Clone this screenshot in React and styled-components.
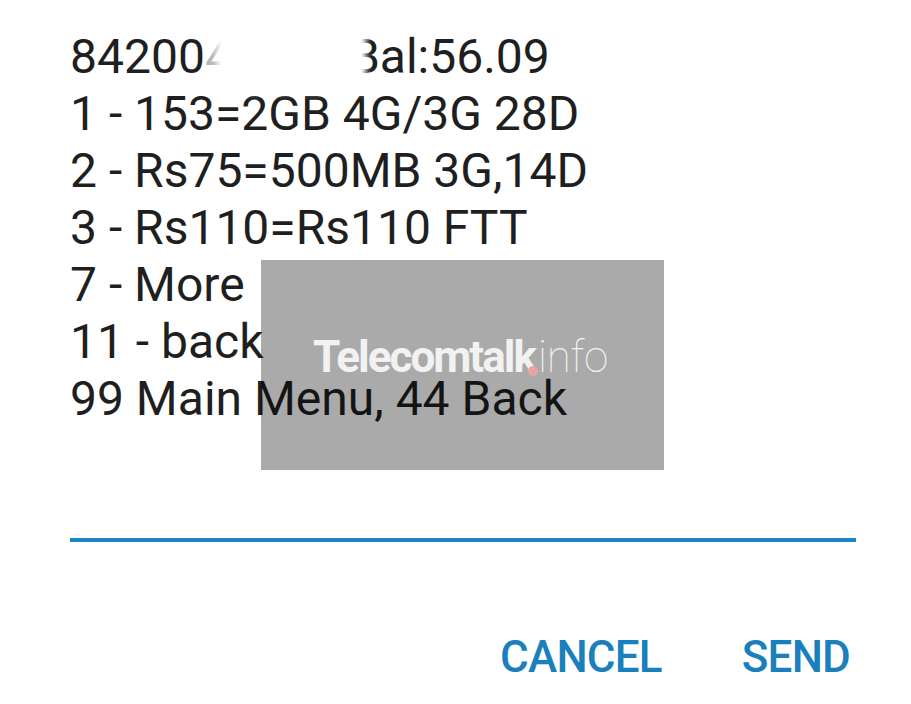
import React from 'react';
import styled, { createGlobalStyle } from 'styled-components';

const GlobalStyle = createGlobalStyle`
	html, body {
		margin: 0;
		padding: 0;
		background: #ffffff;
	}
	body {
		font-family: Roboto, 'Liberation Sans', sans-serif;
	}
`;

const lines = [
	'1 - 153=2GB 4G/3G 28D',
	'2 - Rs75=500MB 3G,14D',
	'3 - Rs110=Rs110 FTT',
	'7 - More',
	'11 - back',
	'99 Main Menu, 44 Back',
];

const App = () => {
	return (
		<Page>
			<GlobalStyle />
			<Dialog>
				<Message>
					<Line>
						84200
						<Masked>4</Masked>
						Bal:56.09
					</Line>
					{lines.map((text, index) => (
						<Line key={index}>{text}</Line>
					))}
				</Message>

				<Input />

				<Actions>
					<ActionButton>CANCEL</ActionButton>
					<ActionButton>SEND</ActionButton>
				</Actions>
			</Dialog>

			<Watermark>
				<Brand>
					Telecomtalk<Dot />
				</Brand>
				<Domain>info</Domain>
			</Watermark>
		</Page>
	);
};

export default App;

const Page = styled.div`
	position: relative;
	width: 911px;
	height: 704px;
	overflow: hidden;
	background: #ffffff;
`;

const Dialog = styled.div`
	display: flex;
	flex-direction: column;
	width: 786px;
	padding: 28px 0 0 70px;
`;

const Message = styled.div`
	display: flex;
	flex-direction: column;
`;

const Line = styled.div`
	font-size: 48px;
	line-height: 57px;
	color: #1f1f1f;
	white-space: nowrap;
`;

const Masked = styled.span`
	position: relative;
	display: inline-block;
	width: 145px;
	color: #b8b8b8;

	&::after {
		content: '';
		position: absolute;
		left: 16px;
		right: -12px;
		top: 4px;
		bottom: -4px;
		background: #ffffff;
		box-shadow: 0 0 6px 4px #ffffff;
	}
`;

const Input = styled.div`
	height: 4px;
	margin-top: 111px;
	background: #1a84c4;
`;

const Actions = styled.div`
	display: flex;
	justify-content: flex-end;
	gap: 80px;
	margin-top: 90px;
	padding-right: 6px;
`;

const ActionButton = styled.span`
	font-size: 44px;
	font-weight: 500;
	line-height: 50px;
	color: #1a7fbd;
	letter-spacing: -0.8px;
`;

const Watermark = styled.div`
	position: absolute;
	left: 261px;
	top: 260px;
	width: 403px;
	height: 210px;
	display: flex;
	align-items: center;
	justify-content: center;
	padding: 0 4px 16px 0;
	box-sizing: border-box;
	background: rgba(0, 0, 0, 0.335);
	color: #f2f2f2;
	font-size: 44px;
	line-height: 1;
`;

const Brand = styled.span`
	position: relative;
	font-weight: 700;
	letter-spacing: -2px;
`;

const Dot = styled.span`
	position: absolute;
	right: -3px;
	bottom: 3px;
	width: 10px;
	height: 10px;
	border-radius: 50%;
	background: #e9a3a3;
`;

const Domain = styled.span`
	margin-left: 3px;
	font-weight: 100;
	letter-spacing: -0.3px;
`;
